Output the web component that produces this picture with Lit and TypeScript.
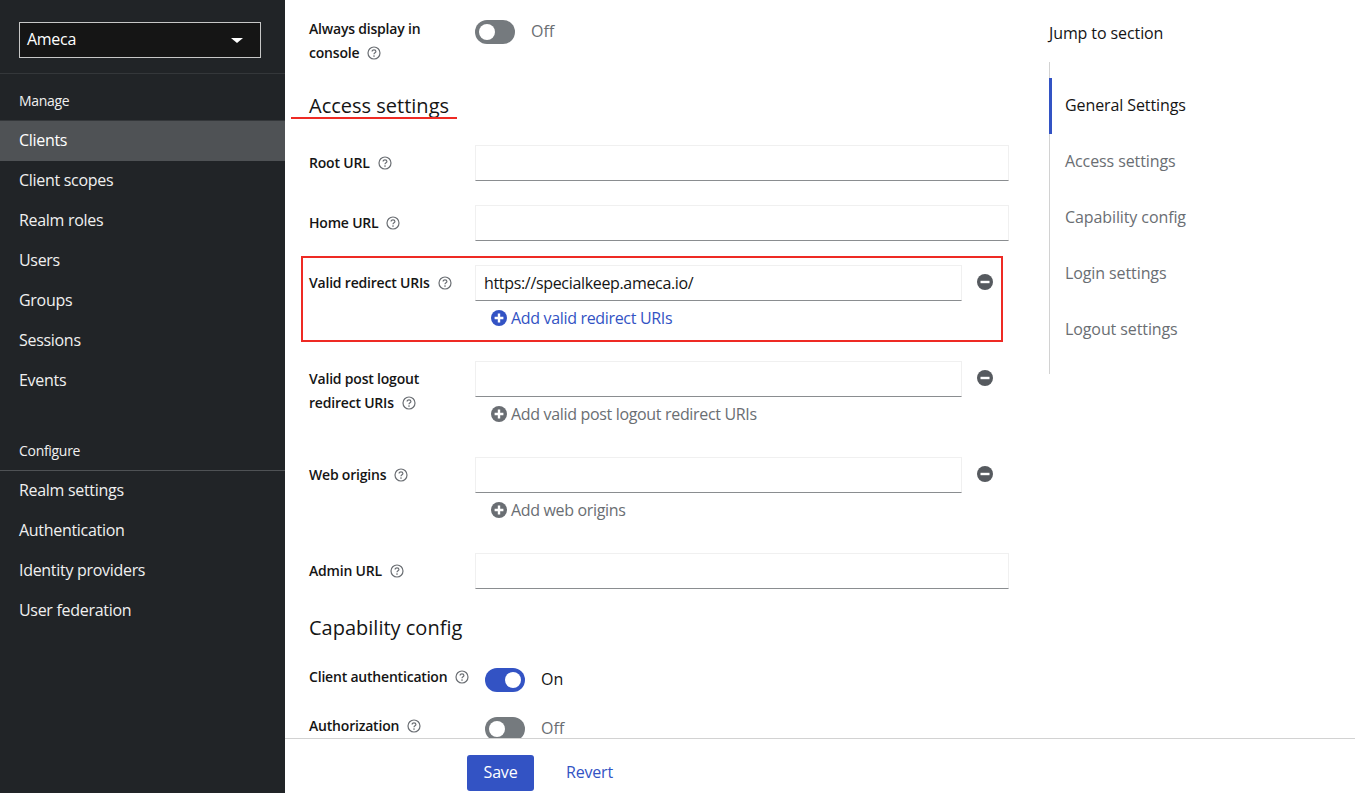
import { LitElement, html, css, svg, nothing } from "lit";
import { customElement } from "lit/decorators.js";

const MANAGE = ["Clients", "Client scopes", "Realm roles", "Users", "Groups", "Sessions", "Events"];
const CONFIGURE = ["Realm settings", "Authentication", "Identity providers", "User federation"];
const SECTIONS = ["General Settings", "Access settings", "Capability config", "Login settings", "Logout settings"];

const helpIcon = svg`<svg class="help" viewBox="0 0 14 14" width="14" height="14" fill="none">
  <circle cx="7" cy="7" r="6" stroke="#6a6e73" stroke-width="1.2"></circle>
  <path d="M5.1 5.6c0-1.1.9-1.8 1.9-1.8s1.9.7 1.9 1.6c0 1.4-1.9 1.4-1.9 2.9" stroke="#6a6e73" stroke-width="1.2"></path>
  <circle cx="7" cy="10.1" r=".8" fill="#6a6e73"></circle>
</svg>`;

const plusIcon = svg`<svg class="add-icon" viewBox="0 0 16 16" width="16" height="16">
  <circle cx="8" cy="8" r="8" fill="currentColor"></circle>
  <path d="M8 3.6v8.8M3.6 8h8.8" stroke="#fff" stroke-width="2.4"></path>
</svg>`;

const minusIcon = svg`<svg viewBox="0 0 16 16" width="16" height="16">
  <circle cx="8" cy="8" r="8" fill="#565a5f"></circle>
  <rect x="3.5" y="6.8" width="9" height="2.4" fill="#fff"></rect>
</svg>`;

@customElement("app-root")
export class AppRoot extends LitElement {
  static styles = css`
    :host {
      display: flex;
      height: 793px;
      overflow: hidden;
      background: #fff;
      color: #151515;
      font-family: "Open Sans", "Noto Sans", sans-serif;
      font-size: 16px;
    }

    /* sidebar */
    .sidebar {
      width: 285px;
      flex-shrink: 0;
      background: #212427;
      color: #f0f0f0;
      letter-spacing: -0.3px;
    }
    .realm {
      padding: 22px 24px 15px 19px;
      border-bottom: 1px solid #34373a;
    }
    .realm-select {
      display: flex;
      align-items: center;
      justify-content: space-between;
      height: 36px;
      box-sizing: border-box;
      padding: 0 17px 2px 7px;
      background: #151515;
      border: 1px solid #c7c7c7;
      color: #fff;
    }
    .caret {
      width: 0;
      height: 0;
      margin-top: 2px;
      border-left: 6px solid transparent;
      border-right: 6px solid transparent;
      border-top: 5px solid #fff;
    }
    .group-title {
      display: flex;
      align-items: center;
      height: 46px;
      padding-left: 19px;
      font-size: 14px;
      box-sizing: border-box;
    }
    .group-title.first {
      padding-top: 6px;
    }
    .configure {
      margin-top: 30px;
      height: 40px;
      border-bottom: 1px solid #4f5255;
    }
    .nav {
      border-top: 1px solid #34373a;
    }
    .configure + .nav {
      border-top: 0;
    }
    .nav-item {
      display: flex;
      align-items: center;
      height: 40px;
      box-sizing: border-box;
      padding: 0 0 2px 19px;
    }
    .nav-item.active {
      background: #4f5255;
      color: #fff;
    }

    /* main */
    .main {
      flex: 1;
      min-width: 0;
      display: flex;
      flex-direction: column;
    }
    .scroller {
      flex: 1;
      min-height: 0;
      overflow: hidden;
      display: flex;
    }
    .form {
      width: 700px;
      margin-left: 24px;
      padding-top: 17px;
      flex-shrink: 0;
      letter-spacing: -0.33px;
    }
    .row {
      display: flex;
      align-items: flex-start;
      margin-bottom: 24px;
    }
    .row.top {
      margin-bottom: 0;
    }
    .label {
      width: 166px;
      flex-shrink: 0;
      font-size: 14px;
      font-weight: 600;
      line-height: 24px;
      letter-spacing: -0.2px;
    }
    .row.input-row .label {
      padding-top: 6px;
    }
    .help {
      margin-left: 8px;
      vertical-align: -2px;
    }
    .control {
      flex: 1;
      min-width: 0;
    }
    .input {
      height: 36px;
      box-sizing: border-box;
      padding: 0 8px;
      display: flex;
      align-items: center;
      border: 1px solid #f0f0f0;
      border-bottom-color: #8a8d90;
    }
    .input-line {
      display: flex;
      align-items: center;
    }
    .input-line .input {
      width: 487px;
    }
    .remove {
      display: flex;
      margin-left: 15px;
      margin-top: -2px;
    }
    .add {
      display: flex;
      align-items: center;
      height: 36px;
      box-sizing: border-box;
      padding: 0 0 2px 16px;
      color: #6a6e73;
    }
    .add.primary {
      color: #3353c4;
    }
    .add-icon {
      margin-right: 4px;
    }
    .multi {
      position: relative;
    }
    .callout {
      position: absolute;
      left: -8px;
      top: -9px;
      width: 702px;
      height: 86px;
      box-sizing: border-box;
      border: 2px solid #ee2a24;
      pointer-events: none;
    }
    .heading {
      position: relative;
      font-size: 20px;
      font-weight: 500;
      line-height: 30px;
      letter-spacing: 0;
      margin-bottom: 22px;
    }
    .heading.access {
      margin-top: 26px;
      margin-bottom: 24px;
    }
    .heading.access::after {
      content: "";
      position: absolute;
      left: -18px;
      top: 26px;
      width: 166px;
      height: 2px;
      background: #ee2a24;
    }
    .toggle-row {
      height: 25px;
    }
    .toggle-cell {
      margin-top: 3px;
    }
    .switch-wrap {
      display: flex;
      align-items: center;
      height: 24px;
      color: #6a6e73;
      letter-spacing: 0;
    }
    .switch-wrap.on {
      color: #151515;
    }
    .switch-text {
      margin-top: -2px;
    }
    .switch {
      position: relative;
      width: 40px;
      height: 24px;
      border-radius: 12px;
      background: #757a7e;
      margin-right: 16px;
      flex-shrink: 0;
    }
    .switch::before {
      content: "";
      position: absolute;
      left: 4px;
      top: 4px;
      width: 16px;
      height: 16px;
      border-radius: 50%;
      background: #fff;
    }
    .switch.on {
      background: #3353c4;
    }
    .switch.on::before {
      left: 20px;
    }
    .with-offset {
      margin-left: 10px;
    }

    /* jump links */
    .jump {
      margin-left: 40px;
      padding-top: 21px;
      width: 260px;
      letter-spacing: -0.1px;
    }
    .jump-title {
      line-height: 24px;
    }
    .jump-list {
      margin-top: 17px;
      padding: 16px 0;
      border-left: 1px solid #d2d2d2;
    }
    .jump-item {
      display: flex;
      align-items: center;
      height: 56px;
      box-sizing: border-box;
      padding: 0 0 2px 13px;
      color: #6a6e73;
      margin-left: -1px;
      border-left: 3px solid transparent;
    }
    .jump-item.active {
      color: #151515;
      border-left-color: #3353c4;
    }

    /* footer */
    .footer {
      height: 55px;
      box-sizing: border-box;
      border-top: 1px solid #d2d2d2;
      padding: 16px 0 0 182px;
      display: flex;
      align-items: flex-start;
      gap: 32px;
      letter-spacing: -0.2px;
    }
    .save {
      height: 36px;
      width: 67px;
      box-sizing: border-box;
      padding-bottom: 2px;
      display: flex;
      align-items: center;
      justify-content: center;
      background: #3353c4;
      color: #fff;
      border-radius: 3px;
    }
    .revert {
      height: 36px;
      box-sizing: border-box;
      padding-bottom: 2px;
      display: flex;
      align-items: center;
      color: #3353c4;
    }
  `;

  private renderField(label: string) {
    return html`<div class="row input-row">
      <div class="label">${label}${helpIcon}</div>
      <div class="control"><div class="input"></div></div>
    </div>`;
  }

  private renderMulti(label: unknown, addText: string, value = "", primary = false) {
    return html`<div class="row input-row multi">
      <div class="label">${label}${helpIcon}</div>
      <div class="control">
        <div class="input-line">
          <div class="input">${value}</div>
          <span class="remove">${minusIcon}</span>
        </div>
        <div class="add ${primary ? "primary" : ""}">${plusIcon}${addText}</div>
      </div>
      ${primary ? html`<div class="callout"></div>` : nothing}
    </div>`;
  }

  private renderToggle(on: boolean, offset = false) {
    return html`<div class="toggle-cell">
      <div class="switch-wrap ${on ? "on" : ""} ${offset ? "with-offset" : ""}">
        <div class="switch ${on ? "on" : ""}"></div>
        <span class="switch-text">${on ? "On" : "Off"}</span>
      </div>
    </div>`;
  }

  protected render() {
    return html`
      <aside class="sidebar">
        <div class="realm">
          <div class="realm-select"><span>Ameca</span><span class="caret"></span></div>
        </div>
        <div class="group-title first">Manage</div>
        <div class="nav">
          ${MANAGE.map(
            (item, i) => html`<div class="nav-item ${i === 0 ? "active" : ""}">${item}</div>`
          )}
        </div>
        <div class="group-title configure">Configure</div>
        <div class="nav">
          ${CONFIGURE.map((item) => html`<div class="nav-item">${item}</div>`)}
        </div>
      </aside>
      <div class="main">
        <div class="scroller">
          <div class="form">
            <div class="row top">
              <div class="label">Always display in<br />console${helpIcon}</div>
              ${this.renderToggle(false)}
            </div>
            <div class="heading access">Access settings</div>
            ${this.renderField("Root URL")}
            ${this.renderField("Home URL")}
            ${this.renderMulti("Valid redirect URIs", "Add valid redirect URIs", "https://specialkeep.ameca.io/", true)}
            ${this.renderMulti(html`Valid post logout<br />redirect URIs`, "Add valid post logout redirect URIs")}
            ${this.renderMulti("Web origins", "Add web origins")}
            ${this.renderField("Admin URL")}
            <div class="heading">Capability config</div>
            <div class="row toggle-row">
              <div class="label">Client authentication${helpIcon}</div>
              ${this.renderToggle(true, true)}
            </div>
            <div class="row toggle-row">
              <div class="label">Authorization${helpIcon}</div>
              ${this.renderToggle(false, true)}
            </div>
          </div>
          <nav class="jump">
            <div class="jump-title">Jump to section</div>
            <div class="jump-list">
              ${SECTIONS.map(
                (s, i) => html`<div class="jump-item ${i === 0 ? "active" : ""}">${s}</div>`
              )}
            </div>
          </nav>
        </div>
        <div class="footer">
          <div class="save">Save</div>
          <div class="revert">Revert</div>
        </div>
      </div>
    `;
  }
}
